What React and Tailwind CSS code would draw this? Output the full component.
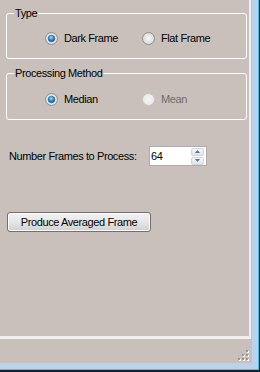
import React from 'react';

const Radio = ({ checked, disabled, id }) => (
  <svg width="13" height="13" viewBox="0 0 13 13" className="shrink-0">
    <defs>
      <radialGradient id={`rf-${id}`} cx="0.5" cy="0.5" r="0.6">
        <stop offset="0" stopColor={disabled ? '#f6f6f6' : '#f8f8f8'} />
        <stop offset="1" stopColor={disabled ? '#e6e6e6' : '#d2d2d2'} />
      </radialGradient>
      <radialGradient id={`rd-${id}`} cx="0.45" cy="0.35" r="0.7">
        <stop offset="0" stopColor="#a9e2ff" />
        <stop offset="0.5" stopColor="#2f8fd0" />
        <stop offset="1" stopColor="#0b4a80" />
      </radialGradient>
    </defs>
    <circle cx="6.5" cy="6.5" r="6" fill={`url(#rf-${id})`} stroke={disabled ? '#c4c4c4' : '#8f8f8f'} strokeWidth="1" />
    {checked && <circle cx="6.5" cy="6.5" r="3.3" fill={`url(#rd-${id})`} stroke="#1c5f99" strokeWidth="0.6" />}
  </svg>
);

const RadioItem = ({ label, checked, disabled, id, width }) => (
  <div className={`flex items-center gap-[6px] ${width}`}>
    <Radio checked={checked} disabled={disabled} id={id} />
    <span className={disabled ? 'text-[#6d6d6d]' : 'text-black'}>{label}</span>
  </div>
);

const Group = ({ title, children, className }) => (
  <fieldset className={`mx-[6px] w-[241px] border border-white rounded-[3px] px-0 ${className}`}>
    <legend className="ml-[7px] px-[1px] leading-[14px] text-black">{title}</legend>
    {children}
  </fieldset>
);

const Grip = () => {
  const dots = [[8, 0], [4, 4], [8, 4], [0, 8], [4, 8], [8, 8]];
  return (
    <svg width="12" height="12" viewBox="0 0 12 12">
      {dots.map(([x, y]) => (
        <g key={`${x}-${y}`}>
          <rect x={x + 1} y={y + 1} width="2" height="2" fill="#ffffff" />
          <rect x={x} y={y} width="2" height="2" fill="#9a9694" />
        </g>
      ))}
    </svg>
  );
};

export default function App() {
  return (
    <div
      className="w-[260px] h-[372px] bg-[#15222c] text-[11px] leading-[13px] tracking-[-0.4px]"
      style={{ fontFamily: '"Liberation Sans", Arial, sans-serif' }}
    >
      <div className="w-[259px] h-[370px] border-r border-b border-[#3ec3ec]">
        <div className="w-[258px] h-[369px] border-r-[6px] border-b-[6px] border-[#bad3ec]">
          <div className="w-[252px] h-[363px] bg-[#c9c0bb] flex flex-col">
            {/* Main panel */}
            <div className="w-[251px] h-[339px] border-r-2 border-b-[3px] border-[#f2f0ef] flex flex-col">
              <Group title="Type" className="mt-[6px] h-[53px]">
                <div className="flex items-center pl-[38px] pt-[12px]">
                  <RadioItem id="dark" label="Dark Frame" checked width="w-[97px]" />
                  <RadioItem id="flat" label="Flat Frame" />
                </div>
              </Group>

              <Group title="Processing Method" className="mt-[7px] h-[54px]">
                <div className="flex items-center pl-[38px] pt-[13px]">
                  <RadioItem id="median" label="Median" checked width="w-[97px]" />
                  <RadioItem id="mean" label="Mean" disabled />
                </div>
              </Group>

              {/* Number of frames */}
              <div className="flex items-center mt-[26px] h-[20px]">
                <span className="ml-[9px] w-[140px] text-black">Number Frames to Process:</span>
                <div className="w-[58px] h-[20px] bg-white border border-[#abadb3] flex items-center">
                  <span className="flex-1 pl-[1px] text-black">64</span>
                  <div className="flex flex-col gap-[1px] mr-[2px]">
                    <div className="w-[13px] h-[8px] rounded-[2px] border border-[#d2d4d8] bg-gradient-to-b from-[#f6f6f6] to-[#e2e4e8] flex items-center justify-center">
                      <svg width="5" height="3" viewBox="0 0 5 3"><path d="M0 3 L2.5 0 L5 3 Z" fill="#4e6fa8" /></svg>
                    </div>
                    <div className="w-[13px] h-[8px] rounded-[2px] border border-[#d2d4d8] bg-gradient-to-b from-[#f6f6f6] to-[#e2e4e8] flex items-center justify-center">
                      <svg width="5" height="3" viewBox="0 0 5 3"><path d="M0 0 L5 0 L2.5 3 Z" fill="#4e6fa8" /></svg>
                    </div>
                  </div>
                </div>
              </div>

              {/* Action button */}
              <button className="ml-[7px] mt-[46px] w-[144px] h-[20px] rounded-[3px] border border-[#707070] p-0 bg-gradient-to-b from-[#f2f2f2] via-[#e6e6e6] to-[#d0d0d0] shadow-[inset_0_0_0_1px_#fcfcfc] text-black text-[11px] leading-[13px]">
                Produce Averaged Frame
              </button>
            </div>

            {/* Status strip with grip */}
            <div className="flex-1 flex justify-end items-end pr-[2px] pb-[1px]">
              <Grip />
            </div>
          </div>
        </div>
      </div>
    </div>
  );
}
